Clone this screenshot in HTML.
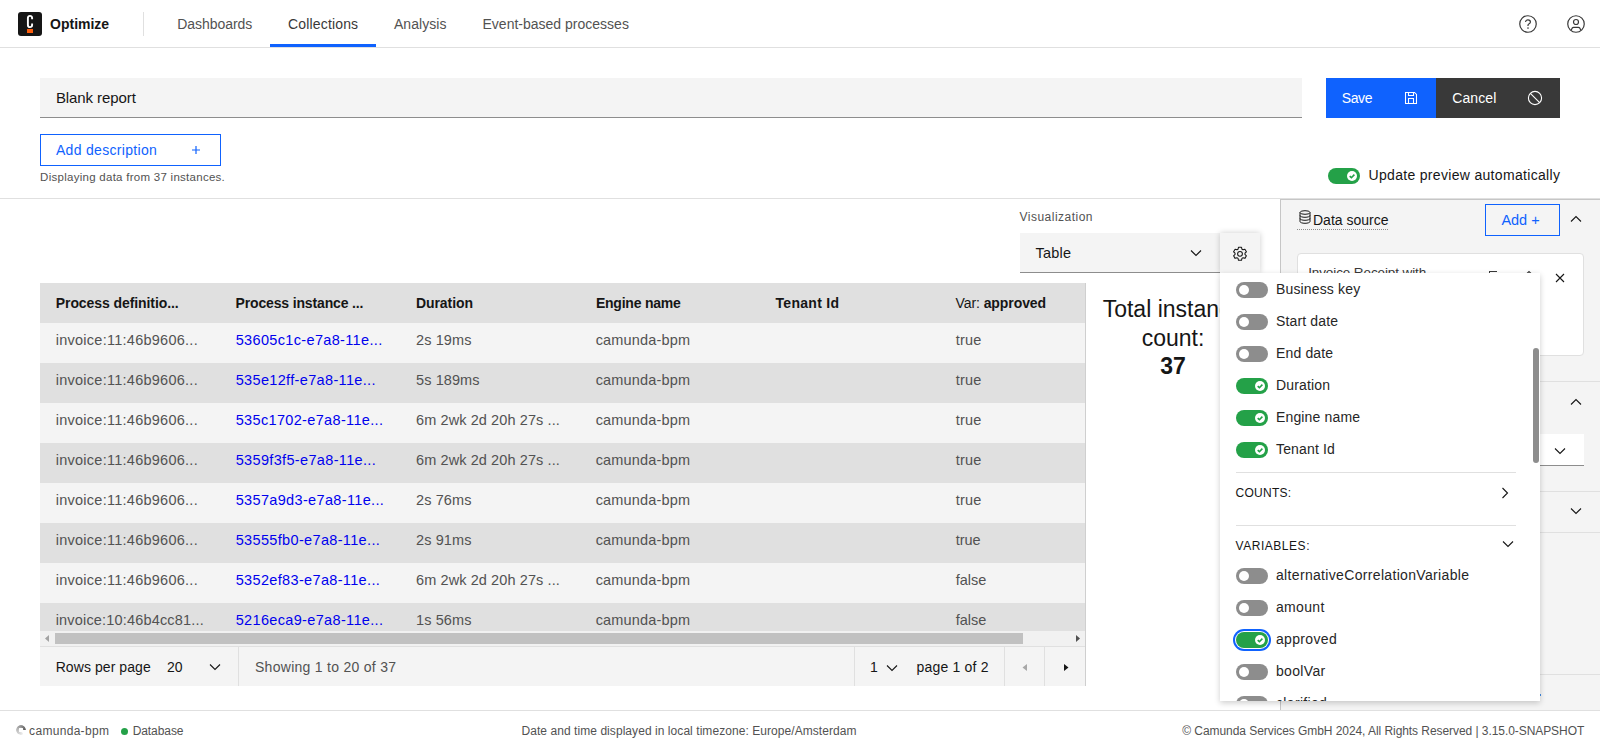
<!DOCTYPE html>
<html><head><meta charset="utf-8">
<style>
*{box-sizing:border-box;margin:0;padding:0}
html,body{width:1600px;height:750px;overflow:hidden;background:#fff;font-family:"Liberation Sans",sans-serif;color:#161616}
.a{position:absolute}
.tx{position:absolute;white-space:nowrap;line-height:1}
.tog{position:absolute;width:32px;height:16px;border-radius:8px;background:#8d8d8d}
.tog::after{content:"";position:absolute;left:3px;top:3px;width:10px;height:10px;border-radius:50%;background:#fff}
.tog.on{background:#24a148}
.tog.on::after{display:none}
</style></head><body>
<div class="a" style="left:0;top:0;width:1600px;height:48px;border-bottom:1px solid #e0e0e0;background:#fff"></div>
<div class="a" style="left:18px;top:12px;width:24px;height:24px;border-radius:3px;background:#161616"></div>
<svg class="a" style="left:26px;top:14px" width="8" height="15" viewBox="0 0 8 15"><path d="M6.1 5.2V4.1C6.1 2.5 5.3 1.9 4 1.9S1.9 2.5 1.9 4.1v6.8c0 1.6.8 2.2 2.1 2.2s2.1-.6 2.1-2.2V9.6" fill="none" stroke="#fff" stroke-width="1.9"/></svg>
<div class="a" style="left:27px;top:29px;width:6px;height:4px;background:#fc5d0d"></div>
<div class="a" style="left:143px;top:12px;width:1px;height:24px;background:#e0e0e0"></div>
<div class="a" style="left:270px;top:44px;width:106px;height:3px;background:#0f62fe"></div>
<svg class="a" style="left:1519px;top:15px" width="18" height="18" viewBox="0 0 18 18"><circle cx="9" cy="9" r="8.25" fill="none" stroke="#393939" stroke-width="1.2"/><path d="M6.6 7.1c0-1.4 1.1-2.3 2.4-2.3s2.4.9 2.4 2.1c0 1.2-.9 1.6-1.6 2.1-.5.3-.8.7-.8 1.4v.6" fill="none" stroke="#393939" stroke-width="1.2"/><circle cx="9" cy="13.1" r=".8" fill="#393939"/></svg>
<svg class="a" style="left:1567px;top:15px" width="18" height="18" viewBox="0 0 18 18"><circle cx="9" cy="9" r="8.25" fill="none" stroke="#393939" stroke-width="1.2"/><circle cx="9" cy="7" r="2.5" fill="none" stroke="#393939" stroke-width="1.2"/><path d="M4.2 15.2l1-2.1c.3-.5.8-.8 1.4-.8h4.8c.6 0 1.1.3 1.4.8l1 2.1" fill="none" stroke="#393939" stroke-width="1.2"/></svg>
<div class="a" style="left:40px;top:78px;width:1262px;height:40px;background:#f4f4f4;border-bottom:1px solid #8d8d8d"></div>
<div class="a" style="left:1326px;top:78px;width:110px;height:40px;background:#0f62fe"></div>
<svg class="a" style="left:1404px;top:91px" width="14" height="14" viewBox="0 0 14 14"><path d="M1.5 1.5h9l2 2v9h-11z M4.5 12.5v-5h5v5 M4.5 1.5v3h5v-3" fill="none" stroke="#fff" stroke-width="1.05"/></svg>
<div class="a" style="left:1436px;top:78px;width:124px;height:40px;background:#393939"></div>
<svg class="a" style="left:1527px;top:90px" width="16" height="16" viewBox="0 0 16 16"><circle cx="8" cy="8" r="6.6" fill="none" stroke="#fff" stroke-width="1.1"/><path d="M3.4 3.4l9.2 9.2" stroke="#fff" stroke-width="1.1"/></svg>
<div class="a" style="left:40px;top:134px;width:181px;height:32px;border:1px solid #0f62fe"></div>
<svg class="a" style="left:191px;top:145px" width="10" height="10" viewBox="0 0 10 10"><path d="M5 1v8M1 5h8" stroke="#0f62fe" stroke-width="1.2"/></svg>
<div class="tog on" style="left:1328px;top:168px"><svg class="a" style="left:19px;top:3px" width="10" height="10" viewBox="0 0 10 10"><circle cx="5" cy="5" r="5" fill="#fff"/><path d="M2.7 5.1l1.7 1.6 3-3.1" fill="none" stroke="#24a148" stroke-width="1.6"/></svg></div>
<div class="a" style="left:0;top:198px;width:1600px;height:1px;background:#e0e0e0"></div>
<div class="a" style="left:1020px;top:233px;width:200px;height:40px;background:#f4f4f4;border-bottom:1px solid #8d8d8d"></div>
<svg class="a" style="left:1190px;top:249px" width="12" height="8" viewBox="0 0 12 8"><path d="M1 1.5l5 5 5-5" fill="none" stroke="#161616" stroke-width="1.1"/></svg>
<div class="a" style="left:1220px;top:233px;width:40px;height:40px;background:#f4f4f4;box-shadow:0 0 6px rgba(0,0,0,.2)"></div>
<svg class="a" style="left:1232px;top:246px" width="16" height="16" viewBox="0 0 16 16"><path d="M9.95 3.20 L9.51 1.27 L6.49 1.27 L6.05 3.20 L4.99 3.81 L3.10 3.23 L1.59 5.84 L3.04 7.19 L3.04 8.41 L1.59 9.76 L3.10 12.37 L4.99 11.79 L6.05 12.40 L6.49 14.33 L9.51 14.33 L9.95 12.40 L11.01 11.79 L12.90 12.37 L14.41 9.76 L12.96 8.41 L12.96 7.19 L14.41 5.84 L12.90 3.23 L11.01 3.81Z" fill="none" stroke="#161616" stroke-width="1.05" stroke-linejoin="round"/><circle cx="8" cy="7.8" r="2.4" fill="none" stroke="#161616" stroke-width="1.05"/></svg>
<div class="a" style="left:40px;top:283px;width:1045px;height:40px;background:#e0e0e0"></div>
<div class="a" style="left:40px;top:323px;width:1045px;height:40px;background:#f4f4f4"></div>
<div class="a" style="left:40px;top:363px;width:1045px;height:40px;background:#e0e0e0"></div>
<div class="a" style="left:40px;top:403px;width:1045px;height:40px;background:#f4f4f4"></div>
<div class="a" style="left:40px;top:443px;width:1045px;height:40px;background:#e0e0e0"></div>
<div class="a" style="left:40px;top:483px;width:1045px;height:40px;background:#f4f4f4"></div>
<div class="a" style="left:40px;top:523px;width:1045px;height:40px;background:#e0e0e0"></div>
<div class="a" style="left:40px;top:563px;width:1045px;height:40px;background:#f4f4f4"></div>
<div class="a" style="left:40px;top:603px;width:1045px;height:28px;background:#e0e0e0"></div>
<div class="a" style="left:40px;top:631px;width:1045px;height:15px;background:#f1f1f1"></div>
<div class="a" style="left:55px;top:633px;width:968px;height:11px;background:#c1c1c1"></div>
<svg class="a" style="left:44px;top:634px" width="6" height="9" viewBox="0 0 6 9"><path d="M1 4.5L5 1v7z" fill="#a3a3a3"/></svg>
<svg class="a" style="left:1075px;top:634px" width="6" height="9" viewBox="0 0 6 9"><path d="M5 4.5L1 1v7z" fill="#505050"/></svg>
<div class="a" style="left:40px;top:646px;width:1045px;height:40px;background:#f4f4f4;border-top:1px solid #e0e0e0"></div>
<div class="a" style="left:1085px;top:283px;width:1px;height:403px;background:#cfcfcf"></div>
<svg class="a" style="left:209px;top:663px" width="12" height="8" viewBox="0 0 12 8"><path d="M1 1.5l5 5 5-5" fill="none" stroke="#161616" stroke-width="1.1"/></svg>
<div class="a" style="left:238px;top:646px;width:1px;height:40px;background:#e0e0e0"></div>
<div class="a" style="left:854px;top:646px;width:1px;height:40px;background:#e0e0e0"></div>
<svg class="a" style="left:886px;top:664px" width="12" height="8" viewBox="0 0 12 8"><path d="M1 1.5l5 5 5-5" fill="none" stroke="#161616" stroke-width="1.1"/></svg>
<div class="a" style="left:1004px;top:646px;width:1px;height:40px;background:#e0e0e0"></div>
<svg class="a" style="left:1022px;top:663px" width="6" height="9" viewBox="0 0 6 9"><path d="M0.5 4.5L5 1v7z" fill="#a8a8a8"/></svg>
<div class="a" style="left:1044px;top:646px;width:1px;height:40px;background:#e0e0e0"></div>
<svg class="a" style="left:1063px;top:663px" width="6" height="9" viewBox="0 0 6 9"><path d="M5.5 4.5L1 1v7z" fill="#161616"/></svg>
<div class="a" style="left:1073px;top:295px;width:200px;height:100px"><div class="a" style="left:0;top:0;width:200px;text-align:center;font-size:23px;line-height:28.7px;color:#161616">Total instance<br>count:<br><b>37</b></div></div>
<div class="a" style="left:1280px;top:199px;width:320px;height:511px;background:#f4f4f4;border-left:1px solid #c6c6c6;border-top:1px solid #c6c6c6"></div>
<svg class="a" style="left:1299px;top:210px" width="12" height="14" viewBox="0 0 12 14"><ellipse cx="6" cy="2.5" rx="5" ry="1.8" fill="none" stroke="#161616" stroke-width="1"/><path d="M1 2.5v9c0 1 2.2 1.8 5 1.8s5-.8 5-1.8v-9M1 5.5c0 1 2.2 1.8 5 1.8s5-.8 5-1.8M1 8.5c0 1 2.2 1.8 5 1.8s5-.8 5-1.8" fill="none" stroke="#161616" stroke-width="1"/></svg>
<div class="a" style="left:1297px;top:229px;width:91px;height:1px;border-top:1px dotted #8d8d8d"></div>
<div class="a" style="left:1485px;top:204px;width:75px;height:32px;border:1px solid #0f62fe"></div>
<svg class="a" style="left:1570px;top:215px" width="12" height="8" viewBox="0 0 12 8"><path d="M1 6.5l5-5 5 5" fill="none" stroke="#161616" stroke-width="1.1"/></svg>
<div class="a" style="left:1297px;top:253px;width:287px;height:103px;background:#fff;border:1px solid #e0e0e0;border-radius:4px"></div>
<div class="a" style="left:1489px;top:271px;width:8px;height:1.3px;background:#393939"></div>
<div class="a" style="left:1489px;top:271px;width:1.3px;height:4px;background:#393939"></div>
<svg class="a" style="left:1525px;top:269px" width="8" height="6" viewBox="0 0 8 6"><path d="M1.5 5l2.5-2.5 2.5 2.5" fill="none" stroke="#393939" stroke-width="1.1"/></svg>
<svg class="a" style="left:1555px;top:273px" width="10" height="10" viewBox="0 0 10 10"><path d="M1 1l8 8M9 1l-8 8" stroke="#161616" stroke-width="1.1"/></svg>
<div class="a" style="left:1281px;top:381px;width:319px;height:1px;background:#e0e0e0"></div>
<svg class="a" style="left:1570px;top:398px" width="12" height="8" viewBox="0 0 12 8"><path d="M1 6.5l5-5 5 5" fill="none" stroke="#161616" stroke-width="1.1"/></svg>
<div class="a" style="left:1450px;top:434px;width:134px;height:32px;background:#fff;border-bottom:1px solid #8d8d8d"></div>
<svg class="a" style="left:1554px;top:447px" width="12" height="8" viewBox="0 0 12 8"><path d="M1 1.5l5 5 5-5" fill="none" stroke="#161616" stroke-width="1.1"/></svg>
<div class="a" style="left:1281px;top:491px;width:319px;height:1px;background:#e0e0e0"></div>
<svg class="a" style="left:1570px;top:507px" width="12" height="8" viewBox="0 0 12 8"><path d="M1 1.5l5 5 5-5" fill="none" stroke="#161616" stroke-width="1.1"/></svg>
<div class="a" style="left:1281px;top:532px;width:319px;height:1px;background:#e0e0e0"></div>
<div class="a" style="left:1281px;top:674px;width:319px;height:1px;background:#e0e0e0"></div>
<div id="opt" class="tx" style="left:50.10px;top:17.15px;font-size:14px;color:#161616;font-weight:bold;letter-spacing:-0.018px">Optimize</div>
<div id="nav1" class="tx" style="left:177.30px;top:17.15px;font-size:14px;color:#525252;letter-spacing:-0.056px">Dashboards</div>
<div id="nav2" class="tx" style="left:288.10px;top:17.15px;font-size:14px;color:#393939;letter-spacing:0.152px">Collections</div>
<div id="nav3" class="tx" style="left:393.90px;top:17.15px;font-size:14px;color:#525252;letter-spacing:0.066px">Analysis</div>
<div id="nav4" class="tx" style="left:482.50px;top:17.15px;font-size:14px;color:#525252;letter-spacing:0.004px">Event-based processes</div>
<div id="title" class="tx" style="left:55.90px;top:90.30px;font-size:15px;color:#161616;letter-spacing:-0.080px">Blank report</div>
<div id="save" class="tx" style="left:1341.80px;top:90.95px;font-size:14px;color:#ffffff;letter-spacing:-0.404px">Save</div>
<div id="cancel" class="tx" style="left:1452.30px;top:90.95px;font-size:14px;color:#ffffff;letter-spacing:0.084px">Cancel</div>
<div id="adddesc" class="tx" style="left:55.90px;top:142.95px;font-size:14px;color:#0f62fe;letter-spacing:0.320px">Add description</div>
<div id="disp" class="tx" style="left:40.10px;top:171.97px;font-size:11.5px;color:#525252;letter-spacing:0.270px">Displaying data from 37 instances.</div>
<div id="upd" class="tx" style="left:1368.50px;top:167.65px;font-size:14px;color:#161616;letter-spacing:0.316px">Update preview automatically</div>
<div id="vis" class="tx" style="left:1019.50px;top:211.14px;font-size:12px;color:#525252;letter-spacing:0.486px">Visualization</div>
<div id="tbl" class="tx" style="left:1035.50px;top:245.53px;font-size:14.5px;color:#161616;letter-spacing:0.205px">Table</div>
<div id="h1" class="tx" style="left:55.75px;top:296.15px;font-size:14px;color:#161616;font-weight:bold;letter-spacing:-0.078px">Process definitio...</div>
<div id="h2" class="tx" style="left:235.50px;top:296.15px;font-size:14px;color:#161616;font-weight:bold;letter-spacing:-0.144px">Process instance ...</div>
<div id="h3" class="tx" style="left:416.00px;top:296.15px;font-size:14px;color:#161616;font-weight:bold;letter-spacing:-0.080px">Duration</div>
<div id="h4" class="tx" style="left:595.90px;top:296.15px;font-size:14px;color:#161616;font-weight:bold;letter-spacing:-0.214px">Engine name</div>
<div id="h5" class="tx" style="left:775.50px;top:296.15px;font-size:14px;color:#161616;font-weight:bold;letter-spacing:0.289px">Tenant Id</div>
<div id="h6" class="tx" style="left:955.50px;top:296.15px;font-size:14px;color:#161616;font-weight:bold;letter-spacing:-0.080px"><span style="font-weight:normal">Var: </span>approved</div>
<div id="c0a" class="tx" style="left:55.70px;top:332.73px;font-size:14.5px;color:#525252;letter-spacing:0.261px">invoice:11:46b9606...</div>
<div id="c0b" class="tx" style="left:235.70px;top:332.73px;font-size:14.5px;color:#0000ee;letter-spacing:0.342px">53605c1c-e7a8-11e...</div>
<div id="c0c" class="tx" style="left:416.00px;top:332.73px;font-size:14.5px;color:#525252;letter-spacing:0.098px">2s 19ms</div>
<div id="c0d" class="tx" style="left:595.70px;top:332.73px;font-size:14.5px;color:#525252;letter-spacing:0.181px">camunda-bpm</div>
<div id="c0e" class="tx" style="left:955.70px;top:332.73px;font-size:14.5px;color:#525252;letter-spacing:0.200px">true</div>
<div id="c1a" class="tx" style="left:55.70px;top:372.73px;font-size:14.5px;color:#525252;letter-spacing:0.261px">invoice:11:46b9606...</div>
<div id="c1b" class="tx" style="left:235.70px;top:372.73px;font-size:14.5px;color:#0000ee;letter-spacing:0.342px">535e12ff-e7a8-11e...</div>
<div id="c1c" class="tx" style="left:416.00px;top:372.73px;font-size:14.5px;color:#525252;letter-spacing:0.098px">5s 189ms</div>
<div id="c1d" class="tx" style="left:595.70px;top:372.73px;font-size:14.5px;color:#525252;letter-spacing:0.181px">camunda-bpm</div>
<div id="c1e" class="tx" style="left:955.70px;top:372.73px;font-size:14.5px;color:#525252;letter-spacing:0.200px">true</div>
<div id="c2a" class="tx" style="left:55.70px;top:412.73px;font-size:14.5px;color:#525252;letter-spacing:0.261px">invoice:11:46b9606...</div>
<div id="c2b" class="tx" style="left:235.70px;top:412.73px;font-size:14.5px;color:#0000ee;letter-spacing:0.342px">535c1702-e7a8-11e...</div>
<div id="c2c" class="tx" style="left:416.00px;top:412.73px;font-size:14.5px;color:#525252;letter-spacing:0.098px">6m 2wk 2d 20h 27s ...</div>
<div id="c2d" class="tx" style="left:595.70px;top:412.73px;font-size:14.5px;color:#525252;letter-spacing:0.181px">camunda-bpm</div>
<div id="c2e" class="tx" style="left:955.70px;top:412.73px;font-size:14.5px;color:#525252;letter-spacing:0.200px">true</div>
<div id="c3a" class="tx" style="left:55.70px;top:452.73px;font-size:14.5px;color:#525252;letter-spacing:0.261px">invoice:11:46b9606...</div>
<div id="c3b" class="tx" style="left:235.70px;top:452.73px;font-size:14.5px;color:#0000ee;letter-spacing:0.342px">5359f3f5-e7a8-11e...</div>
<div id="c3c" class="tx" style="left:416.00px;top:452.73px;font-size:14.5px;color:#525252;letter-spacing:0.098px">6m 2wk 2d 20h 27s ...</div>
<div id="c3d" class="tx" style="left:595.70px;top:452.73px;font-size:14.5px;color:#525252;letter-spacing:0.181px">camunda-bpm</div>
<div id="c3e" class="tx" style="left:955.70px;top:452.73px;font-size:14.5px;color:#525252;letter-spacing:0.200px">true</div>
<div id="c4a" class="tx" style="left:55.70px;top:492.73px;font-size:14.5px;color:#525252;letter-spacing:0.261px">invoice:11:46b9606...</div>
<div id="c4b" class="tx" style="left:235.70px;top:492.73px;font-size:14.5px;color:#0000ee;letter-spacing:0.342px">5357a9d3-e7a8-11e...</div>
<div id="c4c" class="tx" style="left:416.00px;top:492.73px;font-size:14.5px;color:#525252;letter-spacing:0.098px">2s 76ms</div>
<div id="c4d" class="tx" style="left:595.70px;top:492.73px;font-size:14.5px;color:#525252;letter-spacing:0.181px">camunda-bpm</div>
<div id="c4e" class="tx" style="left:955.70px;top:492.73px;font-size:14.5px;color:#525252;letter-spacing:0.200px">true</div>
<div id="c5a" class="tx" style="left:55.70px;top:532.73px;font-size:14.5px;color:#525252;letter-spacing:0.261px">invoice:11:46b9606...</div>
<div id="c5b" class="tx" style="left:235.70px;top:532.73px;font-size:14.5px;color:#0000ee;letter-spacing:0.342px">53555fb0-e7a8-11e...</div>
<div id="c5c" class="tx" style="left:416.00px;top:532.73px;font-size:14.5px;color:#525252;letter-spacing:0.098px">2s 91ms</div>
<div id="c5d" class="tx" style="left:595.70px;top:532.73px;font-size:14.5px;color:#525252;letter-spacing:0.181px">camunda-bpm</div>
<div id="c5e" class="tx" style="left:955.70px;top:532.73px;font-size:14.5px;color:#525252">true</div>
<div id="c6a" class="tx" style="left:55.70px;top:572.73px;font-size:14.5px;color:#525252;letter-spacing:0.261px">invoice:11:46b9606...</div>
<div id="c6b" class="tx" style="left:235.70px;top:572.73px;font-size:14.5px;color:#0000ee;letter-spacing:0.342px">5352ef83-e7a8-11e...</div>
<div id="c6c" class="tx" style="left:416.00px;top:572.73px;font-size:14.5px;color:#525252;letter-spacing:0.098px">6m 2wk 2d 20h 27s ...</div>
<div id="c6d" class="tx" style="left:595.70px;top:572.73px;font-size:14.5px;color:#525252;letter-spacing:0.181px">camunda-bpm</div>
<div id="c6e" class="tx" style="left:955.70px;top:572.73px;font-size:14.5px;color:#525252">false</div>
<div id="c7a" class="tx" style="left:55.70px;top:612.73px;font-size:14.5px;color:#525252;letter-spacing:0.176px">invoice:10:46b4cc81...</div>
<div id="c7b" class="tx" style="left:235.70px;top:612.73px;font-size:14.5px;color:#0000ee;letter-spacing:0.342px">5216eca9-e7a8-11e...</div>
<div id="c7c" class="tx" style="left:416.00px;top:612.73px;font-size:14.5px;color:#525252;letter-spacing:0.098px">1s 56ms</div>
<div id="c7d" class="tx" style="left:595.70px;top:612.73px;font-size:14.5px;color:#525252;letter-spacing:0.181px">camunda-bpm</div>
<div id="c7e" class="tx" style="left:955.70px;top:612.73px;font-size:14.5px;color:#525252">false</div>
<div id="rpp" class="tx" style="left:55.70px;top:659.65px;font-size:14px;color:#161616;letter-spacing:0.069px">Rows per page</div>
<div id="rpp20" class="tx" style="left:167.00px;top:659.65px;font-size:14px;color:#161616">20</div>
<div id="show" class="tx" style="left:255.00px;top:659.65px;font-size:14px;color:#525252;letter-spacing:0.278px">Showing 1 to 20 of 37</div>
<div id="pg1" class="tx" style="left:870.00px;top:659.65px;font-size:14px;color:#161616">1</div>
<div id="pgof" class="tx" style="left:916.50px;top:659.65px;font-size:14px;color:#161616;letter-spacing:0.194px">page 1 of 2</div>
<div id="ds" class="tx" style="left:1313.00px;top:212.95px;font-size:14px;color:#161616;letter-spacing:0.001px">Data source</div>
<div id="addp" class="tx" style="left:1501.40px;top:212.53px;font-size:14.5px;color:#0f62fe;letter-spacing:-0.002px">Add +</div>
<div id="inv" class="tx" style="left:1308.20px;top:266.07px;font-size:13.5px;color:#393939;letter-spacing:-0.109px">Invoice Receipt with</div>
<div class="a" style="left:1073px;top:296px;width:200px;height:100px"></div>
<div class="a" style="left:1220px;top:273px;width:320px;height:428px;background:#fff;box-shadow:0 2px 6px rgba(0,0,0,.2)"></div>
<div class="a" style="left:1220px;top:273px;width:320px;height:428px;overflow:hidden"><div class="a" style="left:-1220px;top:-273px;width:1600px;height:750px">
<div class="a" style="left:1533px;top:348px;width:6px;height:115px;border-radius:3px;background:#8d8d8d"></div>
<div class="tog" style="left:1236px;top:282px"></div>
<div class="tog" style="left:1236px;top:314px"></div>
<div class="tog" style="left:1236px;top:346px"></div>
<div class="tog on" style="left:1236px;top:378px"><svg class="a" style="left:19px;top:3px" width="10" height="10" viewBox="0 0 10 10"><circle cx="5" cy="5" r="5" fill="#fff"/><path d="M2.7 5.1l1.7 1.6 3-3.1" fill="none" stroke="#24a148" stroke-width="1.6"/></svg></div>
<div class="tog on" style="left:1236px;top:410px"><svg class="a" style="left:19px;top:3px" width="10" height="10" viewBox="0 0 10 10"><circle cx="5" cy="5" r="5" fill="#fff"/><path d="M2.7 5.1l1.7 1.6 3-3.1" fill="none" stroke="#24a148" stroke-width="1.6"/></svg></div>
<div class="tog on" style="left:1236px;top:442px"><svg class="a" style="left:19px;top:3px" width="10" height="10" viewBox="0 0 10 10"><circle cx="5" cy="5" r="5" fill="#fff"/><path d="M2.7 5.1l1.7 1.6 3-3.1" fill="none" stroke="#24a148" stroke-width="1.6"/></svg></div>
<div class="a" style="left:1236px;top:472px;width:280px;height:1px;background:#e0e0e0"></div>
<svg class="a" style="left:1501px;top:487px" width="8" height="12" viewBox="0 0 8 12"><path d="M1.5 1l5 5-5 5" fill="none" stroke="#161616" stroke-width="1.1"/></svg>
<div class="a" style="left:1236px;top:525px;width:280px;height:1px;background:#e0e0e0"></div>
<svg class="a" style="left:1502px;top:540px" width="12" height="8" viewBox="0 0 12 8"><path d="M1 1.5l5 5 5-5" fill="none" stroke="#161616" stroke-width="1.1"/></svg>
<div class="tog" style="left:1236px;top:568px"></div>
<div class="tog" style="left:1236px;top:600px"></div>
<div class="tog on" style="left:1236px;top:632px;box-shadow:0 0 0 1px #fff,0 0 0 3px #0f62fe"><svg class="a" style="left:19px;top:3px" width="10" height="10" viewBox="0 0 10 10"><circle cx="5" cy="5" r="5" fill="#fff"/><path d="M2.7 5.1l1.7 1.6 3-3.1" fill="none" stroke="#24a148" stroke-width="1.6"/></svg></div>
<div class="tog" style="left:1236px;top:664px"></div>
<div class="tog" style="left:1236px;top:696px"></div>
<div id="p0" class="tx" style="left:1276.00px;top:281.85px;font-size:14px;color:#262626;letter-spacing:0.150px">Business key</div>
<div id="p1" class="tx" style="left:1276.00px;top:313.85px;font-size:14px;color:#262626;letter-spacing:0.150px">Start date</div>
<div id="p2" class="tx" style="left:1276.00px;top:345.85px;font-size:14px;color:#262626;letter-spacing:0.150px">End date</div>
<div id="p3" class="tx" style="left:1276.00px;top:377.85px;font-size:14px;color:#262626;letter-spacing:0.150px">Duration</div>
<div id="p4" class="tx" style="left:1276.00px;top:409.85px;font-size:14px;color:#262626;letter-spacing:0.150px">Engine name</div>
<div id="p5" class="tx" style="left:1276.00px;top:441.85px;font-size:14px;color:#262626;letter-spacing:0.150px">Tenant Id</div>
<div id="counts" class="tx" style="left:1235.50px;top:487.14px;font-size:12px;color:#161616;letter-spacing:0.283px">COUNTS:</div>
<div id="vars" class="tx" style="left:1235.50px;top:539.84px;font-size:12px;color:#161616;letter-spacing:0.540px">VARIABLES:</div>
<div id="v0" class="tx" style="left:1276.00px;top:568.15px;font-size:14px;color:#262626;letter-spacing:0.331px">alternativeCorrelationVariable</div>
<div id="v1" class="tx" style="left:1276.00px;top:600.15px;font-size:14px;color:#262626;letter-spacing:0.331px">amount</div>
<div id="v2" class="tx" style="left:1276.00px;top:632.15px;font-size:14px;color:#262626;letter-spacing:0.331px">approved</div>
<div id="v3" class="tx" style="left:1276.00px;top:664.15px;font-size:14px;color:#262626;letter-spacing:0.331px">boolVar</div>
<div id="v4" class="tx" style="left:1276.00px;top:696.15px;font-size:14px;color:#262626;letter-spacing:0.331px">clarified</div>
</div></div>
<div class="a" style="left:0;top:710px;width:1600px;height:40px;background:#fff;border-top:1px solid #e0e0e0"></div>
<div class="a" style="left:16px;top:725px;width:10px;height:10px;border-radius:50%;background:conic-gradient(from 100deg,rgba(80,80,80,0) 0deg,rgba(80,80,80,0) 45deg,rgba(80,80,80,.12) 60deg,rgba(80,80,80,.45) 200deg,rgba(80,80,80,.9) 345deg,rgba(80,80,80,0) 350deg);-webkit-mask:radial-gradient(circle,transparent 2.1px,#000 2.6px)"></div>
<div class="a" style="left:1540px;top:694px;width:1.3px;height:2.4px;background:#3b7fd0"></div>
<div class="a" style="left:121px;top:727.5px;width:7px;height:7px;border-radius:50%;background:#24a148"></div>
<div id="f1" class="tx" style="left:29.10px;top:725.14px;font-size:12px;color:#525252;letter-spacing:0.309px">camunda-bpm</div>
<div id="f2" class="tx" style="left:132.70px;top:725.14px;font-size:12px;color:#525252;letter-spacing:-0.082px">Database</div>
<div id="f3" class="tx" style="left:521.50px;top:725.24px;font-size:12px;color:#525252;letter-spacing:0.060px">Date and time displayed in local timezone: Europe/Amsterdam</div>
<div id="f4" class="tx" style="left:1182.30px;top:725.24px;font-size:12px;color:#525252;letter-spacing:-0.063px">© Camunda Services GmbH 2024, All Rights Reserved | 3.15.0-SNAPSHOT</div>
</body></html>
